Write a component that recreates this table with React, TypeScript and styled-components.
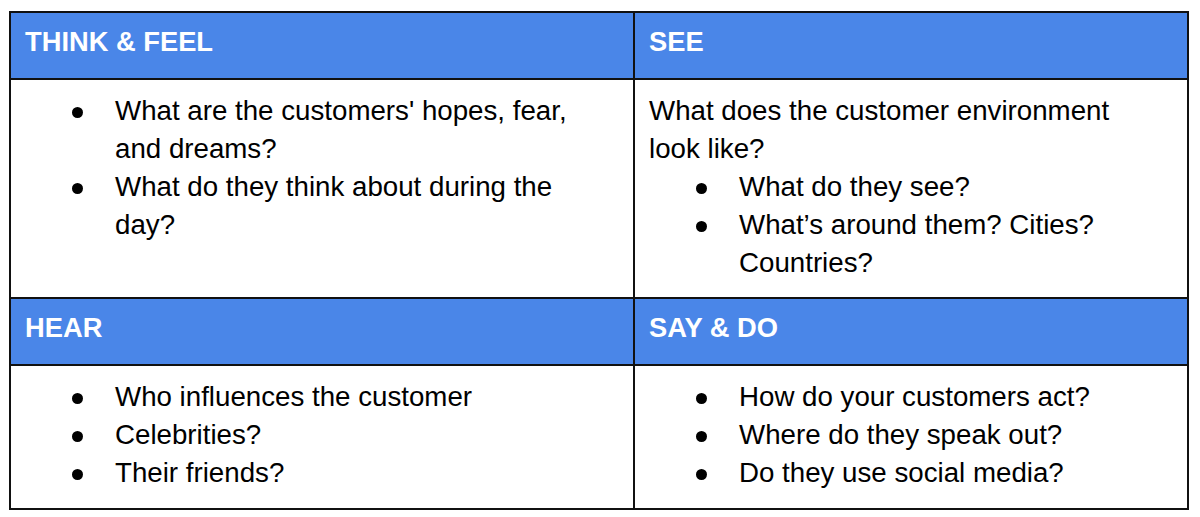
import React from "react";
import styled, { createGlobalStyle } from "styled-components";

const Global = createGlobalStyle`
  html, body { margin: 0; padding: 0; background: #ffffff; }
  body { font-family: "Liberation Sans", Arial, sans-serif; color: #000; }
`;

const Page = styled.div`
  padding: 11px 0 0 9px;
`;

const Grid = styled.div`
  display: grid;
  grid-template-columns: 624px 554px;
  width: 1180px;
  border-left: 2px solid #111;
  border-top: 2px solid #111;
  box-sizing: border-box;
`;

const Cell = styled.div<{ $head?: boolean; $tall?: boolean }>`
  border-right: 2px solid #111;
  border-bottom: 2px solid #111;
  background: ${(p) => (p.$head ? "#4a86e8" : "#ffffff")};
  padding: ${(p) =>
    p.$head ? "10px 40px 17px 14px" : p.$tall ? "12px 40px 16px 14px" : "12px 40px 15px 14px"};
  font-size: ${(p) => (p.$head ? "27.3px" : "27.7px")};
  font-weight: ${(p) => (p.$head ? 700 : 400)};
  color: ${(p) => (p.$head ? "#ffffff" : "#000000")};
  line-height: 38px;
  box-sizing: border-box;
`;

const Para = styled.div``;

const List = styled.ul`
  list-style: none;
  margin: 0;
  padding: 0;
`;

const Item = styled.li`
  display: grid;
  grid-template-columns: 90px 1fr;
`;

const Bullet = styled.span`
  height: 38px;
  display: flex;
  align-items: center;
  padding-left: 47px;
  padding-top: 3px;
  box-sizing: border-box;
  &::before {
    content: "";
    width: 11px;
    height: 11px;
    border-radius: 50%;
    background: #000;
  }
`;

const Bullets = ({ items }: { items: string[] }) => (
  <List>
    {items.map((t) => (
      <Item key={t}>
        <Bullet />
        <span>{t}</span>
      </Item>
    ))}
  </List>
);

export default function App() {
  return (
    <>
      <Global />
      <Page>
        <Grid>
          <Cell $head>THINK &amp; FEEL</Cell>
          <Cell $head>SEE</Cell>
          <Cell>
            <Bullets
              items={[
                "What are the customers' hopes, fear, and dreams?",
                "What do they think about during the day?",
              ]}
            />
          </Cell>
          <Cell>
            <Para>What does the customer environment look like?</Para>
            <Bullets
              items={["What do they see?", "What’s around them? Cities? Countries?"]}
            />
          </Cell>
          <Cell $head>HEAR</Cell>
          <Cell $head>SAY &amp; DO</Cell>
          <Cell $tall>
            <Bullets
              items={["Who influences the customer", "Celebrities?", "Their friends?"]}
            />
          </Cell>
          <Cell $tall>
            <Bullets
              items={[
                "How do your customers act?",
                "Where do they speak out?",
                "Do they use social media?",
              ]}
            />
          </Cell>
        </Grid>
      </Page>
    </>
  );
}
